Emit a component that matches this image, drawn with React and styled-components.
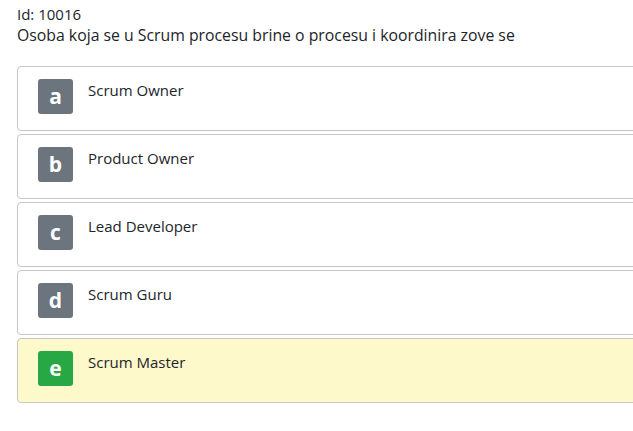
import React from "react";
import styled, { createGlobalStyle } from "styled-components";

const GlobalStyle = createGlobalStyle`
  html, body {
    margin: 0;
    padding: 0;
    background: #fff;
    overflow: hidden;
  }
  body {
    font-family: "Open Sans", "Noto Sans", sans-serif;
    color: #212529;
  }
`;

const Page = styled.div`
  padding: 4px 0 0 17px;
  width: 720px;
`;

const Meta = styled.div`
  font-size: 15px;
  line-height: 20px;
`;

const Question = styled.div`
  font-size: 15.8px;
  line-height: 22px;
  margin-bottom: 20px;
`;

const List = styled.div`
  display: flex;
  flex-direction: column;
  gap: 3px;
`;

const Answer = styled.div`
  display: flex;
  align-items: flex-start;
  height: 65px;
  box-sizing: border-box;
  padding: 12px 20px;
  border: 1px solid #c6c6c6;
  border-radius: 4px;
  background: ${(p) => (p.$correct ? "#fef9cb" : "#fff")};
`;

const Badge = styled.div`
  width: 35px;
  height: 35px;
  flex: none;
  border-radius: 3px;
  background: ${(p) => (p.$correct ? "#28a745" : "#6c757d")};
  color: #fff;
  font-size: 21px;
  font-weight: 700;
  display: flex;
  align-items: center;
  justify-content: center;
  padding-bottom: 2px;
  box-sizing: border-box;
`;

const Label = styled.div`
  margin-left: 15px;
  font-size: 15px;
  line-height: 20px;
  padding-top: 1px;
`;

const answers = [
  { key: "a", text: "Scrum Owner" },
  { key: "b", text: "Product Owner" },
  { key: "c", text: "Lead Developer" },
  { key: "d", text: "Scrum Guru" },
  { key: "e", text: "Scrum Master", correct: true },
];

export default function App() {
  return (
    <>
      <GlobalStyle />
      <Page>
        <Meta>Id: 10016</Meta>
        <Question>
          Osoba koja se u Scrum procesu brine o procesu i koordinira zove se
        </Question>
        <List>
          {answers.map((a) => (
            <Answer key={a.key} $correct={a.correct}>
              <Badge $correct={a.correct}>{a.key}</Badge>
              <Label>{a.text}</Label>
            </Answer>
          ))}
        </List>
      </Page>
    </>
  );
}
